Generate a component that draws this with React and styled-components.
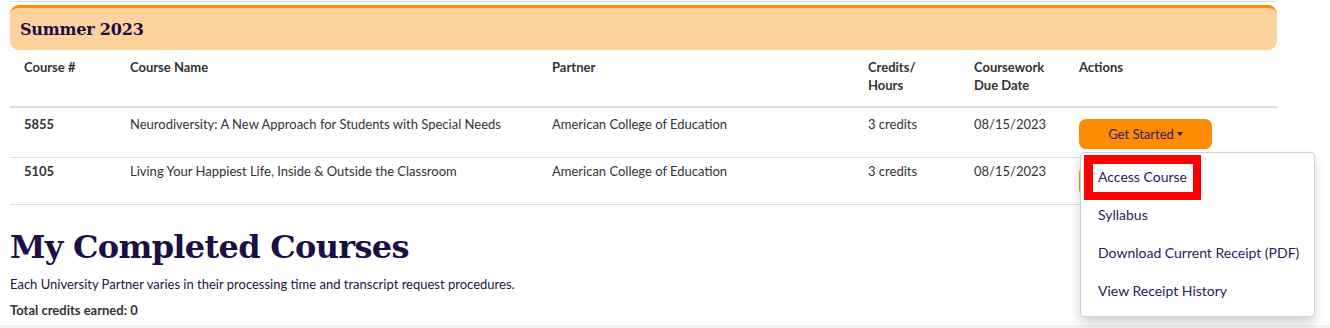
import React from "react";
import styled, { createGlobalStyle } from "styled-components";

const GlobalStyle = createGlobalStyle`
  body {
    margin: 0;
    background: #fff;
    font-family: Lato, "Noto Sans", sans-serif;
    color: #333;
  }
`;

const courses = [
  {
    id: 5855,
    name: "Neurodiversity: A New Approach for Students with Special Needs",
    partner: "American College of Education",
    credits: "3 credits",
    due: "08/15/2023",
    open: true,
    padTop: 7,
  },
  {
    id: 5105,
    name: "Living Your Happiest Life, Inside & Outside the Classroom",
    partner: "American College of Education",
    credits: "3 credits",
    due: "08/15/2023",
    open: false,
    padTop: 4,
  },
];

const menuItems = [
  { label: "Access Course", highlight: true },
  { label: "Syllabus" },
  { label: "Download Current Receipt (PDF)" },
  { label: "View Receipt History" },
];

const App = () => {
  return (
    <>
      <GlobalStyle />
      <Page>
        <Section>
          <TopRule />
          <Term>
            <TermTitle>Summer 2023</TermTitle>
          </Term>
          <Table>
            <HeadRow>
              <HeadCell>Course #</HeadCell>
              <HeadCell>Course Name</HeadCell>
              <HeadCell>Partner</HeadCell>
              <HeadCell>
                Credits/
                <br />
                Hours
              </HeadCell>
              <HeadCell>
                Coursework
                <br />
                Due Date
              </HeadCell>
              <HeadCell>Actions</HeadCell>
            </HeadRow>
            {courses.map((c) => (
              <Row key={c.id} $padTop={c.padTop}>
                <Cell $bold>{c.id}</Cell>
                <Cell>{c.name}</Cell>
                <Cell>{c.partner}</Cell>
                <Cell>{c.credits}</Cell>
                <Cell>{c.due}</Cell>
                <ActionCell>
                  <StartButton>
                    Get Started <Caret />
                  </StartButton>
                  {c.open && (
                    <Menu>
                      {menuItems.map((m) => (
                        <MenuItem key={m.label} $highlight={m.highlight}>
                          {m.label}
                        </MenuItem>
                      ))}
                    </Menu>
                  )}
                </ActionCell>
              </Row>
            ))}
          </Table>
          <Heading>My Completed Courses</Heading>
          <Note>
            Each University Partner varies in their processing time and transcript request
            procedures.
          </Note>
          <Total>Total credits earned: 0</Total>
        </Section>
        <Footer />
      </Page>
    </>
  );
};

export default App;

const Page = styled.div`
  width: 1330px;
  height: 328px;
  overflow: hidden;
  display: flex;
  flex-direction: column;
`;

const Section = styled.section`
  width: 1267px;
  margin-left: 10px;
  flex: 1;
`;

const TopRule = styled.div`
  height: 1px;
  margin-top: 1px;
  background: #dcdcdc;
`;

const Term = styled.div`
  margin-top: 3px;
  height: 42px;
  border-top: 3px solid #ff8c00;
  border-radius: 9px;
  background: #ffd29d;
  display: flex;
  align-items: center;
  padding: 0 10px;
`;

const TermTitle = styled.h3`
  margin: 0;
  font-family: "DejaVu Serif", serif;
  font-weight: bold;
  font-size: 16px;
  color: #1c0f45;
  letter-spacing: -0.2px;
`;

const Table = styled.div`
  display: grid;
  grid-template-columns: 106px 422px 316px 106px 105px 1fr;
`;

const HeadRow = styled.div`
  display: contents;
`;

const HeadCell = styled.div`
  padding: 8px 14px 12px;
  font-size: 13px;
  font-weight: bold;
  line-height: 18px;
  color: #333;
  border-bottom: 2px solid #dddddd;
`;

const Row = styled.div`
  display: contents;

  & > div {
    padding-top: ${(p) => p.$padTop}px;
  }
`;

const Cell = styled.div`
  padding: 0 14px 8px;
  font-size: 13px;
  line-height: 18px;
  font-weight: ${(p) => (p.$bold ? "bold" : "normal")};
  color: #333;
  border-bottom: 1px solid #dddddd;
`;

const ActionCell = styled(Cell)`
  position: relative;
`;

const StartButton = styled.button`
  margin-top: 4px;
  width: 133px;
  height: 30px;
  border: none;
  border-radius: 7px;
  background: #ff8c00;
  color: #2a2060;
  font-family: Lato, "Noto Sans", sans-serif;
  font-size: 13px;
  display: flex;
  align-items: center;
  justify-content: center;
  gap: 3px;
  padding: 0;
`;

const Caret = styled.span`
  display: inline-block;
  width: 0;
  height: 0;
  border-left: 3px solid transparent;
  border-right: 3px solid transparent;
  border-top: 4px solid #2a2060;
`;

const Menu = styled.ul`
  position: absolute;
  z-index: 5;
  left: 15px;
  top: 44px;
  width: 235px;
  margin: 0;
  padding: 5px 0 6px;
  list-style: none;
  background: #fff;
  border: 1px solid #d0d0d0;
  border-radius: 4px;
  box-shadow: 0 6px 12px rgba(0, 0, 0, 0.175);
  box-sizing: border-box;
`;

const MenuItem = styled.li`
  position: relative;
  height: 38px;
  display: flex;
  align-items: center;
  padding-left: 17px;
  font-size: 14px;
  color: #2a2060;
  white-space: nowrap;

  ${(p) =>
    p.$highlight &&
    `
    &::after {
      content: "";
      position: absolute;
      left: 3px;
      top: -3px;
      width: 117px;
      height: 45px;
      box-sizing: border-box;
      border: 9px solid #ff0000;
      border-right-width: 8px;
      border-bottom-width: 8px;
    }
  `}
`;

const Heading = styled.h2`
  margin: 24px 0 0;
  font-family: "DejaVu Serif", serif;
  font-weight: bold;
  font-size: 32px;
  line-height: 36px;
  color: #1c0f45;
  letter-spacing: -0.7px;
`;

const Note = styled.p`
  margin: 10px 0 0;
  font-size: 13px;
  line-height: 18px;
  color: #1c1440;
`;

const Total = styled.p`
  margin: 8px 0 0;
  font-size: 13px;
  line-height: 18px;
  font-weight: bold;
  color: #333;
`;

const Footer = styled.div`
  height: 3px;
  background: #f2f2f2;
`;
